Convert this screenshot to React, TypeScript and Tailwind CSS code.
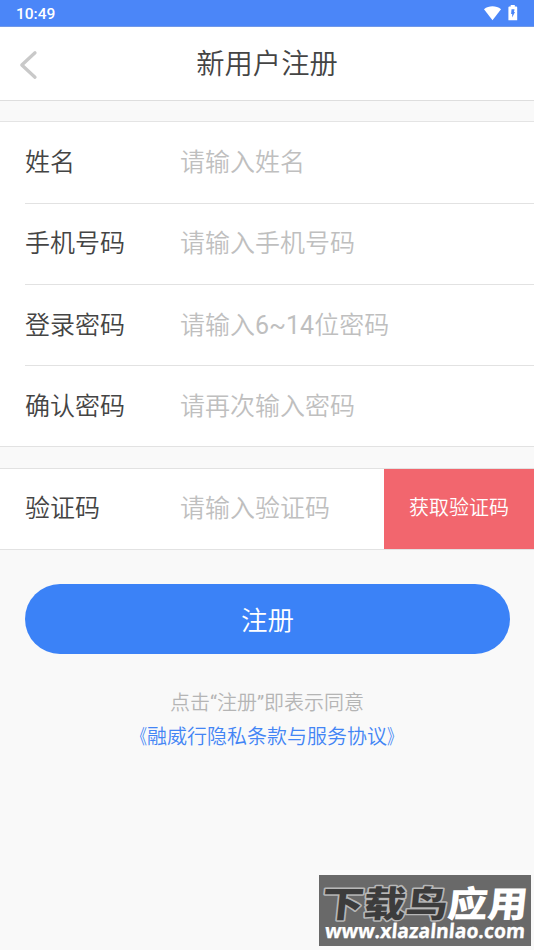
import React from 'react';

const fields = [
  { label: '姓名', hint: '请输入姓名', type: 'text', box: 'h-[82px] border-b' },
  { label: '手机号码', hint: '请输入手机号码', type: 'tel', box: 'h-[81px] border-b pb-[2px]' },
  { label: '登录密码', hint: '请输入6~14位密码', type: 'password', box: 'h-[81px] border-b' },
  { label: '确认密码', hint: '请再次输入密码', type: 'password', box: 'h-[80px]' },
];

const inputStyle =
  'h-full min-w-0 flex-1 bg-transparent text-[25px] text-[#444] outline-none placeholder:text-[#bfbfbf]';

function StatusBar() {
  return (
    <div className="flex h-[27px] items-center justify-between border-b border-[#7199e8] bg-[#4b86f8] pr-4 pl-4 text-white">
      <span className="pt-[3px] text-[15.5px] leading-none font-medium">10:49</span>
      <div className="flex items-center gap-[7px]">
        <svg width="17" height="15" viewBox="0 0 17 15" fill="white">
          <path d="M0 3.2C5-.6 12-.6 17 3.2L8.5 14.3Z" />
        </svg>
        <svg width="10" height="16" viewBox="0 0 10 16">
          <path d="M2.7 0h4.1v1.5h1.4q1 0 1 1V15.2H.4V2.5q0-1 1-1h1.3Z" fill="white" />
          <path d="M3.5 4.2h3L6 7h1L4.2 12.5V9H3.1Z" fill="#4b86f8" />
        </svg>
      </div>
    </div>
  );
}

export default function App() {
  return (
    <main className="flex h-[950px] w-[534px] flex-col overflow-hidden bg-[#f9f9f9] font-['Roboto','Noto_Sans_CJK_SC_DemiLight','Noto_Sans_CJK_SC',sans-serif] font-normal text-[#444]">
      <StatusBar />
      <header className="grid h-[74px] grid-cols-[60px_1fr_60px] items-center border-b border-[#dedede] bg-white">
        <button className="pt-[3px] pl-[19px]" aria-label="返回">
          <svg width="20" height="30" viewBox="0 0 20 30" fill="none" stroke="#c9c9c9" strokeWidth="3.3" strokeLinecap="round" strokeLinejoin="round">
            <path d="M16 2.8 2.8 15 16 27.2" />
          </svg>
        </button>
        <h1 className="pt-[3px] text-center text-[28.3px] leading-none">新用户注册</h1>
      </header>

      <section className="mt-[20px] border-y border-t-[#e4e4e4] border-b-[#e2e2e2] bg-white pl-[25px]">
        {fields.map((field) => (
          <label key={field.label} className={`flex items-center border-[#e2e2e2] ${field.box}`}>
            <span className="w-[155px] text-[25px] leading-none">{field.label}</span>
            <input className={inputStyle} type={field.type} placeholder={field.hint} />
          </label>
        ))}
      </section>

      <section className="mt-[21px] flex h-[82px] items-center border-y border-[#e2e2e2] bg-white pl-[25px]">
        <span className="w-[155px] pb-[2px] text-[25px] leading-none">验证码</span>
        <input className={`${inputStyle} pb-[2px]`} placeholder="请输入验证码" />
        <button className="h-full w-[150px] bg-[#f2666e] pb-[2px] text-[20px] text-white">获取验证码</button>
      </section>

      <button className="mr-[24px] ml-[25px] mt-[34px] h-[70px] rounded-full bg-[#3b82f7] pt-[3px] text-[26.5px] text-white">
        注册
      </button>

      <footer className="mt-[32px] text-center text-[20px] leading-[34px]">
        <p className="text-[#b5b5b5]">点击“注册”即表示同意</p>
        <p className="text-[#4385f5]">
          <span className="inline-block origin-right scale-x-75">《</span>
          融威行隐私条款与服务协议
          <span className="inline-block origin-left scale-x-75">》</span>
        </p>
      </footer>

      <aside className="mt-auto mr-[3px] mb-[4px] h-[71px] w-[212px] self-end bg-[#696969]">
        <svg className="overflow-visible" width="212" height="71" viewBox="0 0 212 71" fontFamily="'Noto Sans CJK SC', sans-serif" fontWeight="900">
          <g transform="skewX(-6)" fontSize="36" paintOrder="stroke" strokeLinejoin="round">
            <text x="6" y="42" textLength="126" lengthAdjust="spacingAndGlyphs" fill="#3c3c3c" stroke="#b7b7b7" strokeWidth="3">下载鸟</text>
            <text x="132" y="42" textLength="80" lengthAdjust="spacingAndGlyphs" fill="#fff">应用</text>
          </g>
          <text transform="skewX(-5)" x="11" y="63.5" fontFamily="'Open Sans', sans-serif" fontSize="20" fontWeight="700" fill="#fff" stroke="#fff" strokeWidth=".3" textLength="200" lengthAdjust="spacingAndGlyphs">
            www.xlazalnlao.com
          </text>
        </svg>
      </aside>
    </main>
  );
}
